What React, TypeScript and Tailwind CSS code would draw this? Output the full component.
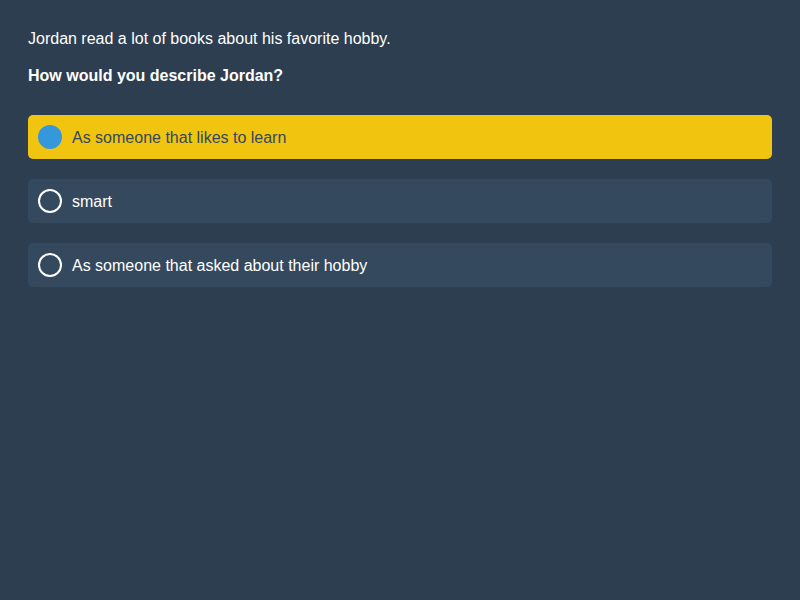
import React, { useState } from 'react';

const options = [
  'As someone that likes to learn',
  'smart',
  'As someone that asked about their hobby',
];

const App: React.FC = () => {
  const [selected, setSelected] = useState(0);

  return (
    <div
      className="min-h-screen w-full bg-[#2c3e50] px-[28px] pt-[29px] text-white"
      style={{ fontFamily: '"Liberation Sans", Arial, sans-serif' }}
    >
      <p className="text-[16px] leading-[20px] mb-[17px]">Jordan read a lot of books about his favorite hobby.</p>
      <p className="text-[16px] leading-[20px] font-bold mb-[29px]">How would you describe Jordan?</p>
      <div className="flex flex-col gap-[20px]">
        {options.map((opt, i) => {
          const active = i === selected;
          return (
            <button
              key={opt}
              onClick={() => setSelected(i)}
              className={
                active
                  ? 'flex h-[44px] w-full items-center gap-[10px] rounded-[5px] bg-[#f1c40f] px-[10px] text-left text-[16px] text-[#34495e]'
                  : 'flex h-[44px] w-full items-center gap-[10px] rounded-[5px] bg-[#34495e] px-[10px] text-left text-[16px] text-white'
              }
            >
              {active ? (
                <span className="block h-[24px] w-[24px] shrink-0 rounded-full bg-[#3498db]"></span>
              ) : (
                <span className="block h-[24px] w-[24px] shrink-0 rounded-full border-2 border-white"></span>
              )}
              <span className="pt-[2px]">{opt}</span>
            </button>
          );
        })}
      </div>
    </div>
  );
};

export default App;
